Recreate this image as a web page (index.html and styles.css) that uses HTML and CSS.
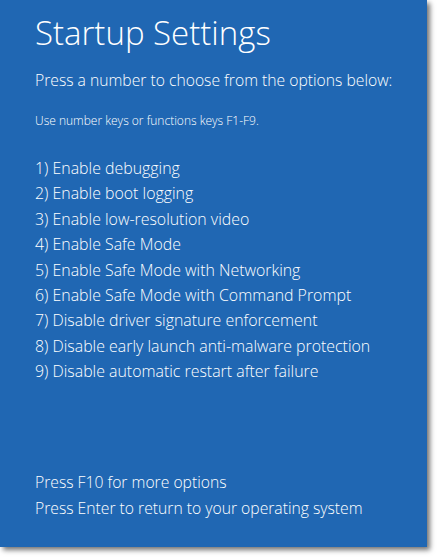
FILE: index.html
```
<!DOCTYPE html>
<html>
<head>
<meta charset="utf-8">
<link rel="stylesheet" href="styles.css">
</head>
<body>
<div class="screen">
  <h1 class="title">Startup Settings</h1>
  <p class="lead">Press a number to choose from the options below:</p>
  <p class="hint">Use number keys or functions keys F1-F9.</p>
  <ul class="options">
    <li>1) Enable debugging</li>
    <li>2) Enable boot logging</li>
    <li>3) Enable low-resolution video</li>
    <li>4) Enable Safe Mode</li>
    <li>5) Enable Safe Mode with Networking</li>
    <li>6) Enable Safe Mode with Command Prompt</li>
    <li>7) Disable driver signature enforcement</li>
    <li>8) Disable early launch anti-malware protection</li>
    <li>9) Disable automatic restart after failure</li>
  </ul>
  <div class="footer">
    <p>Press F10 for more options</p>
    <p>Press Enter to return to your operating system</p>
  </div>
</div>
</body>
</html>
```
FILE: styles.css
```
html, body {
  margin: 0;
  padding: 0;
  background: #ffffff;
}
body {
  width: 440px;
  height: 560px;
  overflow: hidden;
  font-family: "Open Sans", "Noto Sans", sans-serif;
  color: #ffffff;
}
.screen {
  width: 427px;
  height: 547px;
  background: #2067b3;
  box-shadow: 3px 3px 5px rgba(0,0,0,0.55);
  box-sizing: border-box;
  padding: 13px 0 0 35px;
  display: flex;
  flex-direction: column;
}
.title {
  margin: 0;
  font-size: 33px;
  font-weight: 300;
  line-height: 40px;
  letter-spacing: 0;
}
.lead {
  margin: 16px 0 0 0;
  font-size: 15.7px;
  font-weight: 350;
  line-height: 22px;
}
.hint {
  margin: 22px 0 0 0;
  font-size: 12px;
  font-weight: 350;
  line-height: 16px;
}
.options {
  list-style: none;
  margin: 27px 0 0 0;
  padding: 0;
  font-size: 15.9px;
  font-weight: 350;
  line-height: 25.4px;
}
.footer {
  margin-top: auto;
  margin-bottom: 26px;
  font-size: 15.7px;
  font-weight: 350;
  line-height: 25.5px;
}
.footer p { margin: 0; }
```
